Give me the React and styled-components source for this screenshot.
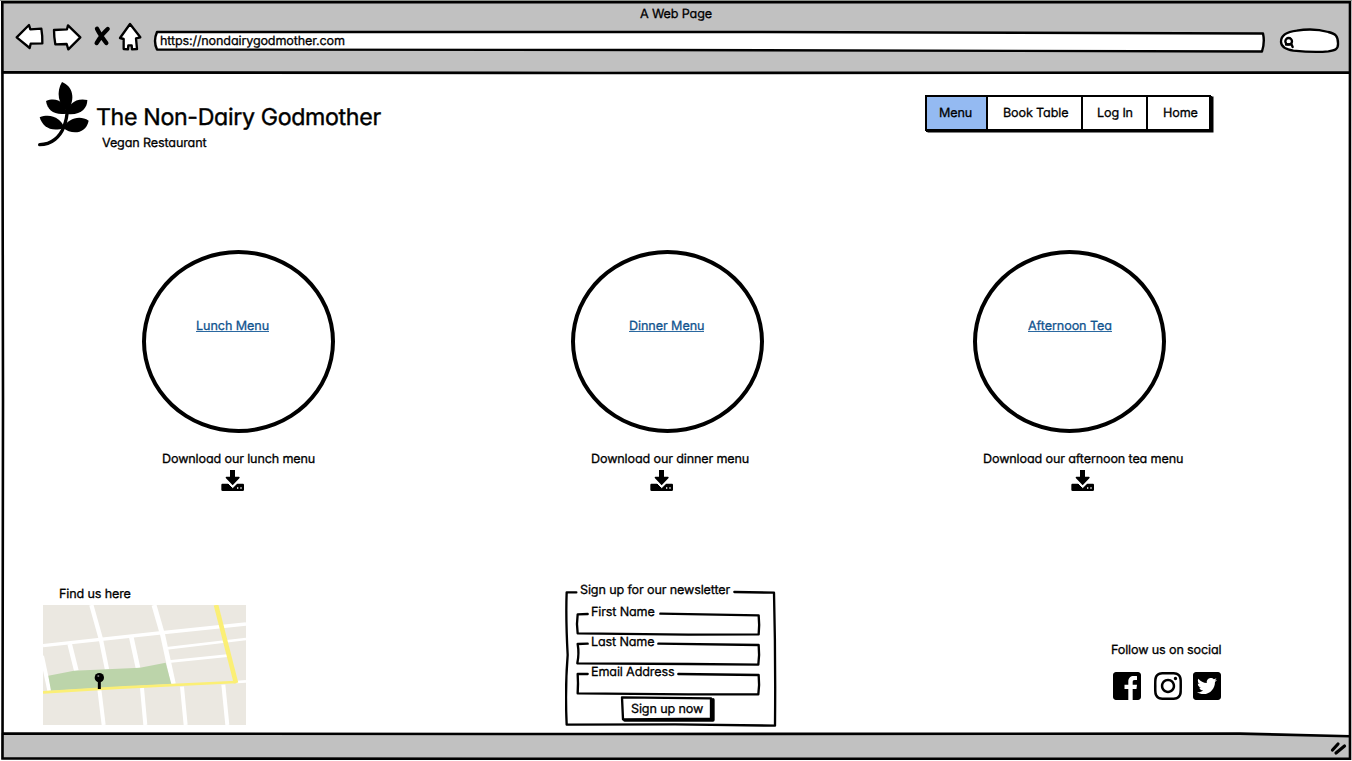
import React from "react";
import styled, { createGlobalStyle } from "styled-components";
import { FaInstagram, FaTwitterSquare } from "react-icons/fa";

const GlobalStyle = createGlobalStyle`
  * { box-sizing: border-box; }
  body { margin: 0; background: #fff; }
`;

const Window = styled.div`
  position: relative;
  width: 1352px;
  height: 761px;
  display: flex;
  flex-direction: column;
  overflow: hidden;
  padding: 1px;
  background: #fff;
  color: #000;
  font-family: Inter, "Open Sans", sans-serif;
  font-feature-settings: "cv11";
  text-rendering: geometricPrecision;
`;

const FrameLines = styled.svg`
  position: absolute;
  inset: 0;
  width: 1352px;
  height: 761px;
  pointer-events: none;
`;

const Text = styled.span`
  display: block;
  white-space: nowrap;
  height: 16px;
  font-size: 12.6px;
  line-height: 20px;
  letter-spacing: -0.14px;
  -webkit-text-stroke: 0.3px currentColor;
`;

const Chrome = styled.header`
  height: 73px;
  flex: none;
  background: #c1c1c1;
  padding: 4px 0 0 14px;
`;

const WindowTitle = styled(Text)`
  padding-left: 625px;
`;

const Toolbar = styled.div`
  display: flex;
  height: 32px;
  margin-top: 1px;
`;

const ToolIcon = styled.svg`
  width: ${(p) => p.$w}px;
  height: 32px;
  flex: none;
  margin-right: ${(p) => p.$gap}px;
  fill: #fff;
  stroke: #000;
  stroke-width: 7;
  stroke-linejoin: round;
  stroke-linecap: round;
`;

const AddressBar = styled.div`
  position: relative;
  width: 1113px;
  height: 32px;
  flex: none;
  margin-right: 13px;
  padding: 10px 0 0 7px;
`;

const Sketch = styled.svg`
  position: absolute;
  inset: 0;
  width: 100%;
  height: 100%;
  fill: #fff;
  stroke: #000;
  stroke-linejoin: round;
  stroke-linecap: round;
`;

const Over = styled(Text)`
  position: relative;
`;

const Page = styled.main`
  height: 659px;
  flex: none;
  padding-left: 37px;
  display: flex;
  flex-direction: column;
`;

const TopRow = styled.div`
  display: flex;
  height: 176px;
  padding-top: 7px;
`;

const SprigIcon = styled.svg`
  width: 52px;
  height: 66px;
  margin-right: 6px;
`;

const Brand = styled.div`
  width: 829px;
  padding-top: 22px;
`;

const BrandName = styled.h1`
  margin: 0;
  font-size: 23.2px;
  line-height: 28px;
  font-weight: 400;
  white-space: nowrap;
  letter-spacing: -0.35px;
  -webkit-text-stroke: 0.4px #000;
`;

const Tagline = styled(Text)`
  margin: 3px 0 0 6px;
`;

const Nav = styled.nav`
  display: flex;
  width: 286px;
  height: 36px;
  margin-top: 14px;
  border: 2px solid #000;
  background: #fff;
  box-shadow: 1px 1px 0 #000, 2.5px 1.5px 0 #000;
`;

const NavItem = styled.a`
  width: ${(p) => p.$w}px;
  flex: none;
  padding: 7px 0 0 ${(p) => p.$pad}px;
  border-right: ${(p) => (p.$last ? 0 : 2)}px solid #000;
  background: ${(p) => (p.$active ? "#94baf2" : "#fff")};
`;

const Menus = styled.section`
  display: grid;
  grid-template-columns: 429px 402px 193px;
  height: 335px;
  padding-left: 104px;
`;

const MenuCard = styled.article`
  width: 193px;
`;

const Disc = styled.div`
  width: 193px;
  height: 183px;
  border: 4px solid #000;
  border-radius: 50%;
  padding: 63px 0 0 ${(p) => p.$pad - 4}px;
`;

const MenuLink = styled(Text)`
  width: max-content;
  height: 15px;
  letter-spacing: -0.08px;
  color: #11548f;
  border-bottom: 1px solid #2a68a0;
`;

const Caption = styled(Text)`
  margin: 17px 0 0 ${(p) => p.$pad}px;
`;

const DownloadIcon = styled.svg`
  display: block;
  width: 24px;
  height: 22px;
  margin: 4px 0 0 ${(p) => p.$pad}px;
`;

const BottomRow = styled.section`
  display: flex;
`;

const Location = styled.div`
  width: 527px;
  padding-left: 5px;
`;

const MapHeading = styled(Text)`
  padding-left: 16px;
`;

const MapPicture = styled.svg`
  display: block;
  width: 203px;
  height: 120px;
  margin-top: 4px;
`;

const Newsletter = styled.form`
  position: relative;
  width: 212px;
  height: 147px;
  margin-right: 334px;
`;

const Legend = styled(Text)`
  position: relative;
  width: max-content;
  margin-top: -4px;
  margin-left: 15px;
`;

const Field = styled.label`
  display: block;
  position: relative;
  height: 30px;
  padding-left: 26px;
`;

const Fields = styled.div`
  padding-top: 6px;
`;

const SubmitLabel = styled(Text)`
  position: relative;
  margin: 7px 0 0 66px;
`;

const Social = styled.div`
  padding-top: 56px;
`;

const SocialIcons = styled.div`
  display: flex;
  margin-top: 13px;
  font-size: 32px;
  height: 32px;
  svg { display: block; flex: none; width: 32px; height: 32px; }
  svg:nth-child(2) { margin: 0 7px 0 9px; }
`;

const StatusBar = styled.footer`
  height: 26px;
  flex: none;
  background: #c1c1c1;
`;

const menus = [
  { title: "Lunch Menu", pad: 54, caption: "Download our lunch menu", capPad: 20, icon: 79 },
  { title: "Dinner Menu", pad: 58, caption: "Download our dinner menu", capPad: 20, icon: 79 },
  { title: "Afternoon Tea", pad: 55, caption: "Download our afternoon tea menu", capPad: 10, icon: 98 },
];

const navItems = [
  { label: "Menu", w: 61, pad: 12 },
  { label: "Book Table", w: 95, pad: 15 },
  { label: "Log In", w: 65, pad: 14 },
  { label: "Home", w: 61, pad: 15 },
];

const Sprig = () => (
  <SprigIcon viewBox="24 18 156 198">
    <path d="M29 209C66 209 90 184 101 157C109 137 112 120 112 100" fill="none" stroke="#000" strokeWidth="10" strokeLinecap="round" />
    <path d="M96 21C128 34 138 70 113 109C84 90 78 50 96 21Z" />
    <path d="M48 78C82 65 107 84 110 116C72 122 52 105 48 78Z" />
    <path d="M172 75C138 67 112 88 111 117C152 122 172 100 172 75Z" />
    <path d="M29 127C64 114 94 131 103 159C64 172 38 157 29 127Z" />
    <path d="M176 137C148 119 115 131 99 158C126 181 168 176 176 137Z" />
  </SprigIcon>
);

const Download = ({ pad }) => (
  <DownloadIcon $pad={pad} viewBox="273 690 72 66">
    <path d="M300 690H315V710H327Q331 711 328 715L308 736L288 715Q285 711 289 710H300Z" />
    <path d="M277 731H296L308 743L320 731H339Q342 731 342 735V749Q342 753 338 753H278Q274 753 274 749V735Q274 731 277 731Z" />
    <path d="M294 729L308 743L322 729" fill="none" stroke="#fff" strokeWidth="3" />
    <path d="M321 742h4v4h-4zM331 742h4v4h-4z" fill="#fff" />
  </DownloadIcon>
);

const FacebookSquare = () => (
  <svg viewBox="0 0 448 512">
    <path d="M448 80v352c0 26.5-21.5 48-48 48h-85.3V302.8h60.6l8.7-67.6h-69.3V192c0-19.6 5.4-32.9 33.5-32.9H384V98.7c-6.2-.8-27.4-2.7-52.2-2.7-51.6 0-87 31.5-87 89.4v49.9H184v67.6h60.9V480H48c-26.5 0-48-21.5-48-48V80c0-26.5 21.5-48 48-48h352c26.5 0 48 21.5 48 48z" />
  </svg>
);

const CityMap = () => (
  <MapPicture viewBox="39 75 609 360">
    <rect x="39" y="75" width="609" height="360" fill="#ebe8e1" />
    <g fill="none" stroke="#fff">
      <path d="M39 197L388 159L648 132" strokeWidth="10" />
      <path d="M184 75L212 175L231 268" strokeWidth="13" />
      <path d="M372 75L398 165L430 312" strokeWidth="15" />
      <path d="M119 192L139 272M304 172L324 264" strokeWidth="14" />
      <path d="M36 228L58 332" strokeWidth="12" />
      <path d="M410 205L648 177M416 245L592 227" strokeWidth="8" />
      <path d="M208 328L221 435M336 324L346 435M456 320L467 435M580 314L592 435" strokeWidth="12" />
      <path d="M620 306L648 304" strokeWidth="8" />
    </g>
    <path d="M55 287L132 272L330 263L407 248L424 312L63 332Z" fill="#bcd4aa" />
    <path d="M39 337L270 323L618 306" fill="none" stroke="#fbef75" strokeWidth="8" />
    <path d="M558 75L618 309" fill="none" stroke="#fbef75" strokeWidth="14" />
    <path d="M208 304V327" stroke="#000" strokeWidth="9" />
    <circle cx="208" cy="293" r="14" />
    <circle cx="205" cy="288" r="3" fill="#777" />
  </MapPicture>
);

export default function App() {
  return (
    <Window>
      <GlobalStyle />
      <Chrome>
        <WindowTitle>A Web Page</WindowTitle>
        <Toolbar>
          <ToolIcon $w={30} $gap={7} viewBox="45 66 90 96">
            <path d="M50 112L87 75L91 88L124 86Q128 110 127 130L92 131L89 144Z" />
          </ToolIcon>
          <ToolIcon $w={30} $gap={10} viewBox="156 66 90 96">
            <path d="M162 90L201 88L204 76L241 112L205 148L200 132L166 133Q162 110 162 90Z" />
          </ToolIcon>
          <ToolIcon $w={20} $gap={6} viewBox="276 66 60 96">
            <path d="M291 86Q300 104 319 129M323 87Q305 103 290 129" strokeWidth="13" fill="none" />
          </ToolIcon>
          <ToolIcon $w={24} $gap={11} viewBox="354 66 72 96">
            <path d="M390 72L421 112L408 115L411 147L396 148L395 136L385 136L384 148L371 147L371 117L360 114Z" />
          </ToolIcon>
          <AddressBar>
            <Sketch viewBox="0 0 1113 32" strokeWidth="2.4">
              <path d="M4 10L600 10L1110 11.5Q1112 20 1109 29.5L500 28L4 27.5Q0 19 4 10Z" />
            </Sketch>
            <Over>https://nondairygodmother.com</Over>
          </AddressBar>
          <ToolIcon $w={61} $gap={0} viewBox="297 66 183 96">
            <path d="M303 125C303 105 325 95 350 92C380 87 420 89 445 96C468 101 474 110 474 130C475 148 465 151 445 154C410 158 370 155 340 152C318 148 303 142 303 125Z" />
            <circle cx="326" cy="124" r="10" />
            <path d="M318 134L334 132L338 141" fill="none" />
          </ToolIcon>
        </Toolbar>
      </Chrome>

      <Page>
        <TopRow>
          <Sprig />
          <Brand>
            <BrandName>The Non-Dairy Godmother</BrandName>
            <Tagline>Vegan Restaurant</Tagline>
          </Brand>
          <Nav>
            {navItems.map((n, i) => (
              <NavItem key={n.label} $w={n.w} $pad={n.pad} $active={i === 0} $last={i === 3}>
                <Text>{n.label}</Text>
              </NavItem>
            ))}
          </Nav>
        </TopRow>

        <Menus>
          {menus.map((m) => (
            <MenuCard key={m.title}>
              <Disc $pad={m.pad}>
                <MenuLink as="a">{m.title}</MenuLink>
              </Disc>
              <Caption $pad={m.capPad}>{m.caption}</Caption>
              <Download pad={m.icon} />
            </MenuCard>
          ))}
        </Menus>

        <BottomRow>
          <Location>
            <MapHeading>Find us here</MapHeading>
            <CityMap />
          </Location>
          <Newsletter>
            <Sketch viewBox="30 30 636 441" strokeWidth="7" fill="none">
              <path d="M64 52L35 52Q32 130 38 240Q30 340 35 449L360 448L660 452Q662 250 657 53L538 51" />
              <path d="M98 117L68 118Q64 145 68 175L400 179L611 178Q614 150 611 121L316 116" />
              <path d="M98 206L68 207Q73 235 67 265L400 267L610 269Q614 240 611 210L310 206" />
              <path d="M98 297L68 297Q70 325 68 355L400 358L610 358Q614 330 611 300L370 297" />
              <path d="M209 435L474 435L474 374" strokeWidth="10" />
              <path d="M201 367L468 370L468 431L204 433Z" />
            </Sketch>
            <Legend>Sign up for our newsletter</Legend>
            <Fields>
              <Field><Text>First Name</Text></Field>
              <Field><Text>Last Name</Text></Field>
              <Field><Text>Email Address</Text></Field>
            </Fields>
            <SubmitLabel>Sign up now</SubmitLabel>
          </Newsletter>
          <Social>
            <Text>Follow us on social</Text>
            <SocialIcons>
              <FacebookSquare />
              <FaInstagram />
              <FaTwitterSquare />
            </SocialIcons>
          </Social>
        </BottomRow>
      </Page>

      <StatusBar />

      <FrameLines viewBox="0 0 1352 761" fill="none" stroke="#000" strokeWidth="2.6">
        <path d="M0 0.5H1352" stroke="#8d918c" strokeWidth="1" />
        <path d="M1260 733L1349 736V730H1260Z" fill="#fff" stroke="none" />
        <path d="M2.3 2.2L1350 2.3L1349.8 400L1350 758.8L700 758.8L2.5 758.5L3 400Z" />
        <path d="M3 72.4L600 73L1350 72.6" />
        <path d="M3 733.6L600 734L1240 733.6L1350 736.3" />
        <path d="M1332.5 750L1338 744M1336 753L1344.5 746" strokeWidth="3.2" strokeLinecap="round" />
      </FrameLines>
    </Window>
  );
}
